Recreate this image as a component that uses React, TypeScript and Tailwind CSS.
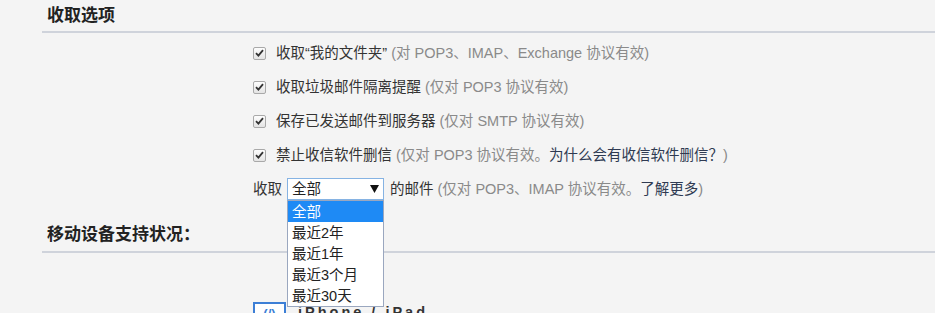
import React from 'react';

const font = { fontFamily: '"Liberation Sans", "Noto Sans CJK SC", sans-serif' };

function Check() {
  return (
    <span className="w-[13px] h-[13px] rounded-[2px] border border-[#a9a9a9] bg-gradient-to-b from-[#fdfdfd] to-[#e4e4e4] flex items-center justify-center shrink-0">
      <svg width="9" height="8" viewBox="0 0 9 8">
        <path d="M1 4.2 L3.4 6.6 L8 1.2" fill="none" stroke="#333" strokeWidth="1.8" />
      </svg>
    </span>
  );
}

function OptionRow({ label, note }: { label: string; note: React.ReactNode }) {
  return (
    <div className="h-[34px] flex items-center gap-[10px]">
      <Check />
      <span className="text-[#333]">
        {label} <span className="text-[#8a8a8a]">{note}</span>
      </span>
    </div>
  );
}

const ranges = ['全部', '最近2年', '最近1年', '最近3个月', '最近30天'];

export default function App() {
  return (
    <div className="w-[935px] h-[313px] overflow-hidden bg-[#f4f4f4] text-[14.5px] leading-[20px]" style={font}>
      <div className="h-[31px] pl-[47px] flex items-center font-bold text-[17px] text-[#222]">收取选项</div>
      <div className="ml-[42px] border-t-2 border-[#cfd3db]" />

      <div className="pl-[253px] pt-[3px]">
        <OptionRow label="收取“我的文件夹”" note="(对 POP3、IMAP、Exchange 协议有效)" />
        <OptionRow label="收取垃圾邮件隔离提醒" note="(仅对 POP3 协议有效)" />
        <OptionRow label="保存已发送邮件到服务器" note="(仅对 SMTP 协议有效)" />
        <OptionRow
          label="禁止收信软件删信"
          note={
            <>
              (仅对 POP3 协议有效。<span className="text-[#2f3a52]">为什么会有收信软件删信？</span>)
            </>
          }
        />
        <div className="h-[34px] flex items-center">
          <span className="text-[#333] mr-[5px]">收取</span>
          <div className="relative">
            <div className="w-[97px] h-[22px] border border-[#86b3e3] bg-white flex items-center justify-between pl-[4px] pr-[4px] text-[#222]">
              <span>全部</span>
              <svg width="9" height="8" viewBox="0 0 9 8">
                <path d="M0 0 H9 L4.5 8 Z" fill="#111" />
              </svg>
            </div>
            <div className="absolute left-0 top-full w-[97px] border border-[#9aa7bf] bg-white z-10">
              {ranges.map((r, i) => (
                <div
                  key={r}
                  className={
                    i === 0
                      ? 'h-[21px] pl-[4px] flex items-center bg-[#1e8af5] text-white'
                      : 'h-[21px] pl-[4px] flex items-center text-[#222]'
                  }
                >
                  {r}
                </div>
              ))}
            </div>
          </div>
          <span className="text-[#333] ml-[6px]">
            的邮件{' '}
            <span className="text-[#8a8a8a]">
              (仅对 POP3、IMAP 协议有效。<span className="text-[#2f3a52]">了解更多</span>)
            </span>
          </span>
        </div>
      </div>

      <div className="h-[45px] pl-[47px] flex items-end pb-[6px] font-bold text-[17px] text-[#222]">移动设备支持状况：</div>
      <div className="ml-[42px] border-t-2 border-[#cfd3db]" />

      <div className="pl-[253px] pt-[49px] flex items-start gap-[12px]">
        <div className="w-[33px] h-[26px] border-2 border-[#3d7fd6] bg-white flex items-start justify-center text-[#3d7fd6] text-[13px] font-bold">
          (/)
        </div>
        <span className="text-[#333] font-bold tracking-[3px]">iPhone / iPad</span>
      </div>
    </div>
  );
}
